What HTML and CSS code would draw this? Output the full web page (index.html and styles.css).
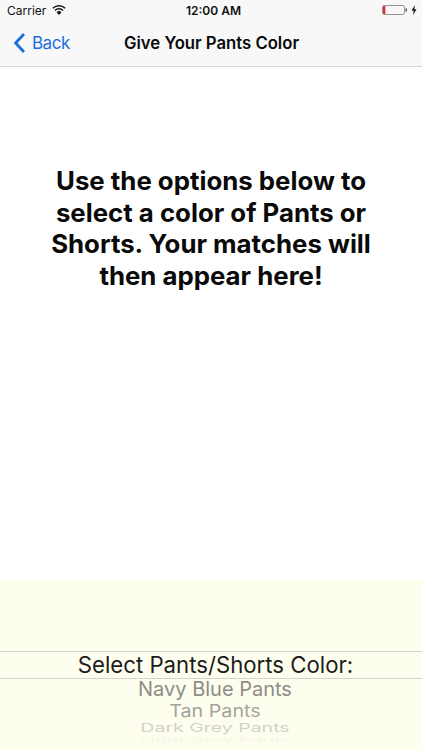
FILE: index.html
```html
<!DOCTYPE html>
<html lang="en">
<head>
<meta charset="utf-8">
<title>Give Your Pants Color</title>
<link rel="stylesheet" href="styles.css">
</head>
<body>
<div class="app">
  <header class="bar">
    <div class="status">
      <div class="status-left">
        <span>Carrier</span>
        <svg class="wifi" viewBox="0 0 14 10" width="14" height="10"><path d="M7 10 4.6 7.2a3.4 3.4 0 0 1 4.8 0Z" fill="#111"/><path d="M2.9 5.4a5.9 5.9 0 0 1 8.2 0" fill="none" stroke="#111" stroke-width="1.4"/><path d="M.9 3.2a8.8 8.8 0 0 1 12.2 0" fill="none" stroke="#111" stroke-width="1.4"/></svg>
      </div>
      <div class="status-time">12:00 AM</div>
      <div class="status-right">
        <svg class="battery" viewBox="0 0 26 10" width="26" height="10"><rect x=".5" y=".5" width="22" height="9" rx="2" fill="none" stroke="#777" stroke-width=".8"/><rect x="1" y="1" width="2.4" height="8" fill="#e0323c"/><rect x="23.5" y="3.5" width="1.5" height="3" fill="#555"/></svg>
        <svg class="bolt" viewBox="0 0 6 10" width="6" height="10"><path d="M4 0 .5 5.6h2.2L2 10l3.5-5.8H3.3Z" fill="#111"/></svg>
      </div>
    </div>
    <nav class="nav">
      <a class="back">
        <svg viewBox="0 0 13 22" width="13" height="22"><path d="M11 2 2.6 11 11 20" fill="none" stroke="#1a6fe0" stroke-width="2.8"/></svg>
        <span>Back</span>
      </a>
      <h1 class="title">Give Your Pants Color</h1>
    </nav>
  </header>
  <main class="content">
    <p class="message">Use the options below to select a color of Pants or Shorts. Your matches will then appear here!</p>
  </main>
  <section class="picker">
    <div class="selected">Select Pants/Shorts Color:</div>
    <ul class="wheel">
      <li class="item item-1">Navy Blue Pants</li>
      <li class="item item-2">Tan Pants</li>
      <li class="item item-3">Dark Grey Pants</li>
      <li class="item item-4">Light Grey Pants</li>
    </ul>
  </section>
</div>
</body>
</html>
```
FILE: styles.css
```css
* { box-sizing: border-box; }
html, body { margin: 0; padding: 0; }
body { font-family: Inter, "Liberation Sans", sans-serif; background: #fff; color: #0a0a0a; }
.app { width: 422px; height: 750px; display: flex; flex-direction: column; overflow: hidden; }
.bar { height: 67px; flex: none; background: #f8f8f8; border-bottom: 1px solid #d6d6d6; }
.status { height: 20px; padding: 0 5px 0 7px; display: grid; grid-template-columns: 1fr auto 1fr; align-items: center; font-size: 12px; color: #111; }
.status-left { display: flex; align-items: center; gap: 6px; }
.status-time { font-weight: 600; font-size: 12px; padding-left: 3px; }
.status-right { display: flex; justify-content: flex-end; align-items: center; gap: 3px; }
.nav { height: 46px; position: relative; display: flex; align-items: center; justify-content: center; }
.back { position: absolute; left: 13px; top: 12px; display: flex; align-items: center; gap: 6px; color: #1a6fe0; font-size: 17px; letter-spacing: -.5px; }
.title { margin: 0; font-size: 16.7px; font-weight: 600; padding-left: 1px; }
.content { height: 513px; flex: none; padding: 98px 40px 0; background: #fff; }
.message { margin: 0; font-size: 25.8px; line-height: 31.7px; font-weight: 700; text-align: center; padding: 0 2px; }
.picker { flex: 1; background: #fefeee; padding-top: 71px; overflow: hidden; }
.selected { height: 28px; border-top: 1px solid #d4d4ca; border-bottom: 1px solid #d4d4ca; text-align: center; font-size: 22.2px; line-height: 26px; color: #1c1c1c; padding-left: 9px; }
.wheel { list-style: none; margin: 0; padding: 0 0 0 8px; text-align: center; }
.item { white-space: nowrap; }
.item-1 { font-size: 20px; height: 21px; line-height: 21px; color: #8d8d88; }
.item-2 { font-size: 19.7px; height: 22px; line-height: 22px; color: #a3a39e; transform: scaleY(.88); }
.item-3 { font-size: 19.5px; height: 13px; line-height: 13px; color: #d2d2ca; transform: scaleY(.6); }
.item-4 { font-size: 19.5px; height: 10px; line-height: 10px; color: #f6f6e8; transform: scaleY(.33); }
```
